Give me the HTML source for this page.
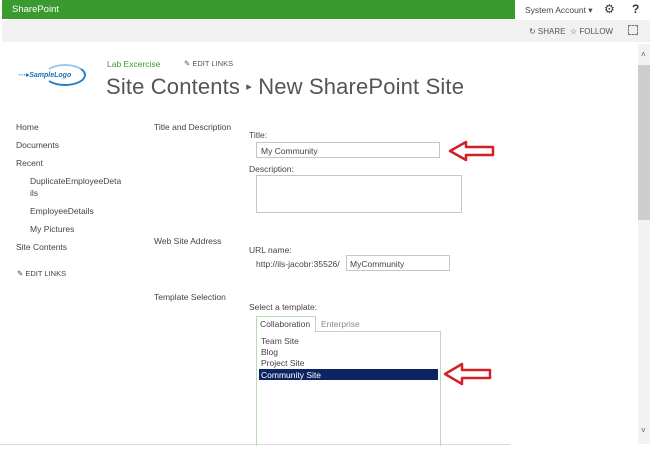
<!DOCTYPE html>
<html><head><meta charset="utf-8">
<style>
*{margin:0;padding:0;box-sizing:border-box}
body{width:650px;height:451px;overflow:hidden;background:#fff;font-family:"Liberation Sans",sans-serif;color:#444;position:relative}
.a{position:absolute;white-space:nowrap}
.s{font-size:8.5px}
.box{position:absolute;border:1px solid #c6c6c6;background:#fff}
</style></head><body>
<div class="a" style="left:0;top:0;width:650px;height:19px;background:#fff"></div>
<div class="a" style="left:2px;top:0;width:513px;height:19px;background:#3a9a2f"></div>
<div class="a" style="left:12px;top:4px;font-size:9.5px;color:#fff">SharePoint</div>
<div class="a s" style="left:525px;top:5px;color:#444">System Account ▾</div>
<div class="a" style="left:604px;top:2px;font-size:12px;color:#333">⚙</div>
<div class="a" style="left:632px;top:2px;font-size:12px;font-weight:bold;color:#333">?</div>
<div class="a" style="left:2px;top:20px;width:648px;height:22px;background:#f1f1f1"></div>
<div class="a" style="left:529px;top:27px;font-size:8px;color:#555">↻ SHARE &nbsp;☆ FOLLOW</div>
<div class="a" style="left:628px;top:25px;width:10px;height:10px;border:1px dashed #777"></div>
<div class="a" style="left:638px;top:44px;width:12px;height:400px;background:#f2f2f2"></div>
<div class="a" style="left:638px;top:65px;width:12px;height:155px;background:#cdcdcd"></div>
<div class="a" style="left:641px;top:50px;font-size:8px;color:#555">˄</div>
<div class="a" style="left:641px;top:426px;font-size:8px;color:#555">˅</div>
<div class="a" style="left:0;top:444px;width:510px;height:1px;background:#d8d8d8"></div>
<!-- logo -->
<div class="a" style="left:44px;top:64px;width:42px;height:22px;border:2px solid #2a7ec0;border-radius:50%;border-left-color:transparent;border-top-color:#9cc6e6"></div>
<div class="a" style="left:18px;top:71px;font-size:7px;font-style:italic;color:#1e6fb4;font-weight:bold">⋯●SampleLogo</div>
<div class="a s" style="left:107px;top:59px;color:#3a9a2f">Lab Excercise</div>
<div class="a" style="left:184px;top:59px;font-size:7.5px;color:#555">✎ EDIT LINKS</div>
<div class="a" style="left:106px;top:74px;font-size:22px;letter-spacing:0.15px;color:#555;font-weight:300">Site Contents <span style="font-size:11px;vertical-align:4px">▸</span> New SharePoint Site</div>
<!-- left nav -->
<div class="a s" style="left:16px;top:122px">Home</div>
<div class="a s" style="left:16px;top:140px">Documents</div>
<div class="a s" style="left:16px;top:158px">Recent</div>
<div class="a s" style="left:30px;top:176px">DuplicateEmployeeDeta</div>
<div class="a s" style="left:30px;top:188px">ils</div>
<div class="a s" style="left:30px;top:206px">EmployeeDetails</div>
<div class="a s" style="left:30px;top:224px">My Pictures</div>
<div class="a s" style="left:16px;top:242px">Site Contents</div>
<div class="a" style="left:17px;top:269px;font-size:7.5px">✎ EDIT LINKS</div>
<!-- form -->
<div class="a s" style="left:154px;top:122px">Title and Description</div>
<div class="a s" style="left:249px;top:130px">Title:</div>
<div class="box" style="left:256px;top:142px;width:184px;height:16px"></div>
<div class="a s" style="left:261px;top:146px">My Community</div>
<div class="a s" style="left:249px;top:164px">Description:</div>
<div class="box" style="left:256px;top:175px;width:206px;height:38px"></div>
<div class="a s" style="left:154px;top:236px">Web Site Address</div>
<div class="a s" style="left:249px;top:245px">URL name:</div>
<div class="a s" style="left:256px;top:259px">http://ils-jacobr:35526/</div>
<div class="box" style="left:346px;top:255px;width:104px;height:16px"></div>
<div class="a s" style="left:350px;top:259px">MyCommunity</div>
<div class="a s" style="left:154px;top:292px">Template Selection</div>
<div class="a s" style="left:249px;top:302px">Select a template:</div>
<div class="a" style="left:256px;top:316px;width:60px;height:16px;border:1px solid #b9dbb5;border-bottom:none;background:#fff;z-index:2"></div>
<div class="a s" style="left:260px;top:319px;z-index:3">Collaboration</div>
<div class="a s" style="left:321px;top:319px;color:#888">Enterprise</div>
<div class="a" style="left:256px;top:331px;width:185px;height:115px;border:1px solid #b9dbb5;border-bottom:none"></div>
<div class="a s" style="left:261px;top:336px">Team Site</div>
<div class="a s" style="left:261px;top:347px">Blog</div>
<div class="a s" style="left:261px;top:358px">Project Site</div>
<div class="a" style="left:259px;top:369px;width:179px;height:11px;background:#0c2461"></div>
<div class="a s" style="left:261px;top:370px;color:#fff">Community Site</div>
<!-- arrows -->
<svg class="a" style="left:448px;top:140px" width="48" height="22" viewBox="0 0 48 22"><path d="M2 11 L18 2 L18 7 L45 7 L45 15 L18 15 L18 20 Z" fill="none" stroke="#d32027" stroke-width="2.5" stroke-linejoin="round"/></svg>
<svg class="a" style="left:443px;top:362px" width="50" height="24" viewBox="0 0 50 24"><path d="M2 12 L19 2 L19 8 L47 8 L47 16 L19 16 L19 22 Z" fill="none" stroke="#d32027" stroke-width="2.5" stroke-linejoin="round"/></svg>
</body></html>
